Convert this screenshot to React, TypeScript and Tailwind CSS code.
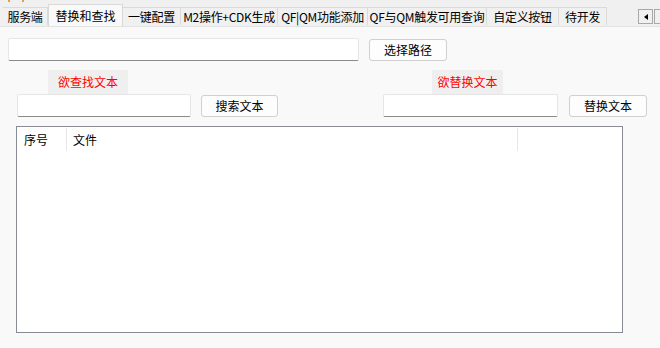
const FONT = { fontFamily: '"Noto Sans CJK SC", "Liberation Sans", sans-serif' }

const tabs = [
  { label: '服务端', w: 'w-[45px]' },
  { label: '替换和查找', w: 'w-[75px]', active: true },
  { label: '一键配置', w: 'w-[58px]' },
  { label: 'M2操作+CDK生成', w: 'w-[97px]' },
  { label: 'QF|QM功能添加', w: 'w-[90px]' },
  { label: 'QF与QM触发可用查询', w: 'w-[119px]' },
  { label: '自定义按钮', w: 'w-[72px]' },
  { label: '待开发', w: 'w-[48px]' },
]

function Tab({ label, w, active }: { label: string; w: string; active?: boolean }) {
  if (active) {
    return (
      <div
        className={`${w} h-[22px] -mb-px flex items-center justify-center bg-[#f9f9f9] border border-b-0 border-[#d9d9d9] text-[12px] text-black whitespace-nowrap z-10`}
      >
        {label}
      </div>
    )
  }
  return (
    <div
      className={`${w} h-[18px] flex items-center justify-center bg-[#f0f0f0] border-t border-r border-[#dadada] text-[12px] text-black whitespace-nowrap tracking-[-0.3px]`}
    >
      {label}
    </div>
  )
}

function TextBox({ w }: { w: string }) {
  return <div className={`${w} h-[23px] bg-white border border-[#e6e6e6] border-b-[#8a8a8a] rounded-[2px]`} />
}

function Btn({ label, w }: { label: string; w: string }) {
  return (
    <button
      type="button"
      className={`${w} h-[22px] flex items-center justify-center bg-[#fdfdfd] border border-[#d0d0d0] rounded-[3px] text-[12px] text-black leading-none`}
    >
      {label}
    </button>
  )
}

export default function App() {
  return (
    <div className="w-[660px] h-[348px] bg-[#f3f3f3] flex flex-col overflow-hidden relative" style={FONT}>
      {/* window icon fragment */}
      <span className="absolute left-[8px] top-0 w-[2px] h-[2px] bg-[#e8a13a]" />
      <span className="absolute left-[22px] top-0 w-[2px] h-[2px] bg-[#e8a13a]" />

      {/* tab strip */}
      <div className="h-[27px] flex items-end pl-[3px] border-b border-[#e2e2e2] bg-[#f0f0f0] shrink-0">
        <div className="flex items-end h-full">
          {tabs.map((t) => (
            <div key={t.label} className="flex items-end mb-px">
              <Tab {...t} />
            </div>
          ))}
        </div>
        <div className="ml-auto flex self-start mt-[9px] gap-px">
          <div className="w-[15px] h-[15px] bg-[#f0f0f0] border border-[#a8a8a8] flex items-center justify-center">
            <svg width="4" height="6" viewBox="0 0 4 6">
              <path d="M4 0 L0 3 L4 6 Z" fill="#000" />
            </svg>
          </div>
          <div className="w-[6px] h-[15px] bg-[#f0f0f0] border-l border-y border-[#a8a8a8]" />
        </div>
      </div>

      {/* body */}
      <div className="flex-1 bg-[#f9f9f9] flex flex-col">
        <div className="flex items-start mt-[11px] pl-[8px]">
          <TextBox w="w-[351px]" />
          <div className="flex ml-[10px] mt-px">
            <Btn label="选择路径" w="w-[78px]" />
          </div>
        </div>

        <div className="flex mt-[9px] h-[24px]">
          <div className="ml-[48px] w-[80px] h-[24px] bg-[#efefef] flex items-center justify-center text-[12px] text-[#ff0000]">
            欲查找文本
          </div>
          <div className="ml-[304px] w-[71px] h-[24px] bg-[#efefef] flex items-center justify-center text-[12px] text-[#ff0000]">
            欲替换文本
          </div>
        </div>

        <div className="flex items-start pl-[17px]">
          <TextBox w="w-[174px]" />
          <div className="flex ml-[10px] mt-px">
            <Btn label="搜索文本" w="w-[77px]" />
          </div>
          <div className="flex ml-[105px]">
            <TextBox w="w-[175px]" />
          </div>
          <div className="flex ml-[11px] mt-px">
            <Btn label="替换文本" w="w-[78px]" />
          </div>
        </div>

        <div className="ml-[16px] mt-[9px] w-[607px] h-[207px] bg-white border border-[#888a94] flex flex-col">
          <div className="flex h-[25px] items-stretch text-[12px] text-black">
            <div className="w-[50px] flex items-center pl-[7px] border-r border-[#e6e6e6] my-px">序号</div>
            <div className="w-[451px] flex items-center pl-[6px] border-r border-[#e6e6e6] my-px">文件</div>
            <div className="flex-1" />
          </div>
        </div>
      </div>
    </div>
  )
}
